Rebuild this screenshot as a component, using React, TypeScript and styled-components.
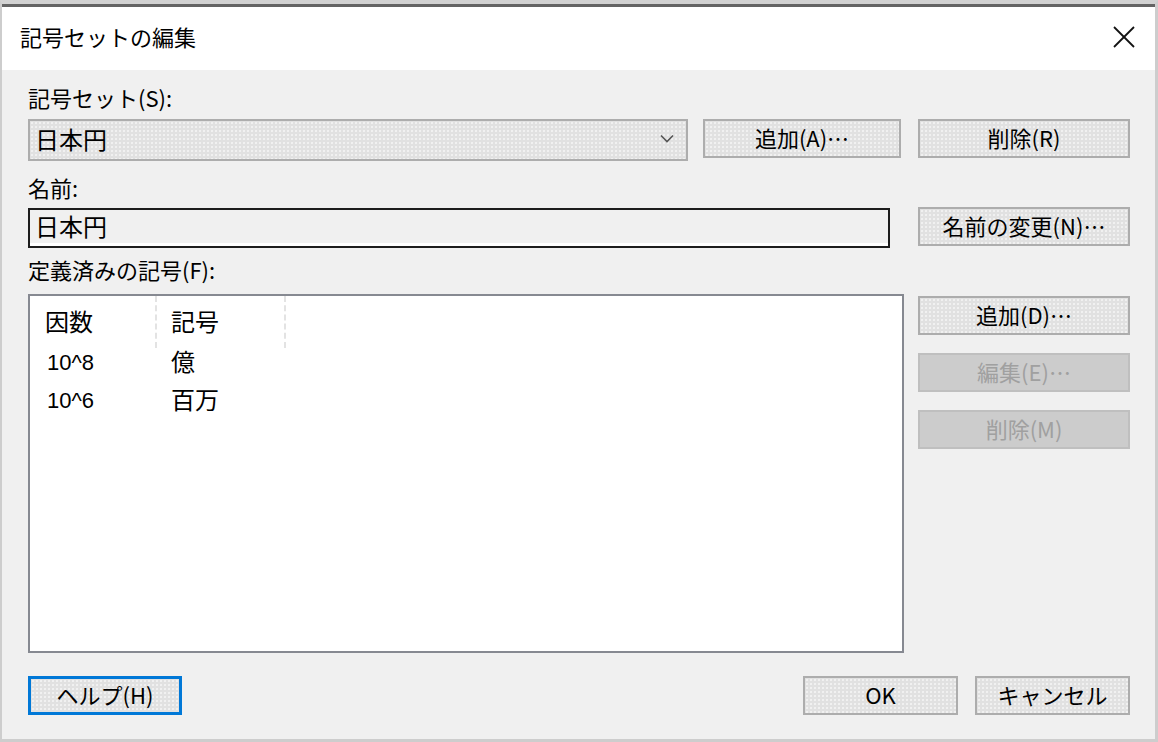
import React from "react";
import styled, { createGlobalStyle, css } from "styled-components";

const Global = createGlobalStyle`
  html, body { margin: 0; padding: 0; background: #f0f0f0; overflow: hidden; }
  body { font-family: "Noto Sans CJK JP", "Noto Sans", sans-serif; color: #000; }
  * { box-sizing: border-box; }
`;

const Frame = styled.div`
  width: 1158px;
  height: 742px;
  border: 2px solid #cdcdcd;
  border-top: 4px solid #d2d2d2;
  border-bottom-width: 3px;
  border-right-width: 3px;
  display: flex;
  flex-direction: column;
`;

const TitleBar = styled.div`
  height: 66px;
  background: #ffffff;
  border-top: 3px solid #646464;
  display: flex;
  align-items: center;
  justify-content: space-between;
  padding: 0 20px 0 18px;
`;

const Title = styled.div`
  font-size: 22px;
  line-height: 1;
  padding-bottom: 6px;
`;

const CloseWrap = styled.div`
  display: flex;
  padding-bottom: 4px;
`;

const Body = styled.div`
  flex: 1;
  background: #f0f0f0;
  padding: 16px 25px 0 26px;
  display: flex;
  flex-direction: column;
`;

const Label = styled.div<{ $mt?: number; $mb?: number }>`
  height: 26px;
  font-size: 22px;
  line-height: 22px;
  margin-top: ${(p) => p.$mt ?? 0}px;
  margin-bottom: ${(p) => p.$mb ?? 7}px;
`;

const Row = styled.div`
  display: flex;
  align-items: flex-start;
`;

const dither = css`
  background-color: #e1e1e1;
  background-image: radial-gradient(circle, rgba(255, 255, 255, 0.55) 0.7px, transparent 1px);
  background-size: 4px 4px;
`;

const Combo = styled.div`
  width: 660px;
  height: 42px;
  ${dither};
  border: 2px solid #adadad;
  display: flex;
  align-items: center;
  justify-content: space-between;
  padding: 0 12px 3px 5px;
  font-size: 24px;
`;

const Button = styled.div<{ $w: number; $disabled?: boolean; $focus?: boolean; $ml?: number; $mt?: number }>`
  width: ${(p) => p.$w}px;
  height: 39px;
  margin-left: ${(p) => p.$ml ?? 0}px;
  margin-top: ${(p) => p.$mt ?? 0}px;
  ${dither};
  border: 2px solid #adadad;
  display: flex;
  align-items: center;
  justify-content: center;
  padding-bottom: 4px;
  font-size: 22px;
  color: #000;
  white-space: nowrap;
  ${(p) =>
    p.$disabled &&
    css`
      background-color: #cccccc;
      background-image: none;
      border-color: #bfbfbf;
      color: #a0a0a0;
    `}
  ${(p) =>
    p.$focus &&
    css`
      border: 3px solid #0078d7;
    `}
`;

const NameInput = styled.div`
  width: 862px;
  height: 40px;
  background: #f0f0f0;
  border: 2px solid #1c1c1c;
  box-shadow: inset 0 -3px 0 #ffffff;
  display: flex;
  align-items: center;
  padding: 0 5px 5px;
  font-size: 24px;
`;

const ListBox = styled.div`
  width: 876px;
  height: 359px;
  background: #ffffff;
  border: 2px solid #868991;
`;

const Header = styled.div`
  display: flex;
  height: 52px;
  margin-bottom: -6px;
`;

const HeadCell = styled.div<{ $w: number; $pl?: number }>`
  width: ${(p) => p.$w}px;
  height: 52px;
  border-right: 2px dashed #e3e3e3;
  display: flex;
  align-items: center;
  padding-left: ${(p) => p.$pl ?? 15}px;
  padding-bottom: 4px;
  font-size: 24px;
`;

const ListRow = styled.div`
  display: flex;
  height: 38px;
  align-items: center;
`;

const Cell = styled.div<{ $w: number; $pl?: number }>`
  width: ${(p) => p.$w}px;
  padding-left: ${(p) => p.$pl ?? 15}px;
  font-size: 24px;
  line-height: 1;
`;

const NumCell = styled(Cell)`
  font-family: "Liberation Sans", sans-serif;
  font-size: 22px;
  padding-top: 3px;
  padding-left: 17px;
`;

const SideColumn = styled.div`
  margin-left: 14px;
  padding-top: 2px;
  display: flex;
  flex-direction: column;
  gap: 18px;
`;

const Footer = styled.div`
  margin-top: 23px;
  display: flex;
  align-items: center;
`;

const Spacer = styled.div`
  flex: 1;
`;

const Chevron = () => (
  <svg width="14" height="9" viewBox="0 0 14 9">
    <polyline points="1,1.5 7,7.5 13,1.5" fill="none" stroke="#555" strokeWidth="1.6" />
  </svg>
);

const CloseIcon = () => (
  <svg width="22" height="22" viewBox="0 0 22 22">
    <line x1="1" y1="1" x2="21" y2="21" stroke="#111" strokeWidth="1.8" />
    <line x1="21" y1="1" x2="1" y2="21" stroke="#111" strokeWidth="1.8" />
  </svg>
);

export default function App() {
  return (
    <>
      <Global />
      <Frame>
        <TitleBar>
          <Title>記号セットの編集</Title>
          <CloseWrap>
            <CloseIcon />
          </CloseWrap>
        </TitleBar>
        <Body>
          <Label>記号セット(S):</Label>
          <Row>
            <Combo>
              <span>日本円</span>
              <Chevron />
            </Combo>
            <Button $w={198} $ml={15}>追加(A)…</Button>
            <Button $w={212} $ml={17}>削除(R)</Button>
          </Row>
          <Label $mt={15} $mb={6}>名前:</Label>
          <Row>
            <NameInput>日本円</NameInput>
            <Button $w={212} $ml={28} $mt={-1}>名前の変更(N)…</Button>
          </Row>
          <Label $mt={10} $mb={10}>定義済みの記号(F):</Label>
          <Row>
            <ListBox>
              <Header>
                <HeadCell $w={127}>因数</HeadCell>
                <HeadCell $w={129} $pl={14}>記号</HeadCell>
              </Header>
              <ListRow>
                <NumCell $w={127}>10^8</NumCell>
                <Cell $w={129} $pl={14}>億</Cell>
              </ListRow>
              <ListRow>
                <NumCell $w={127}>10^6</NumCell>
                <Cell $w={129} $pl={14}>百万</Cell>
              </ListRow>
            </ListBox>
            <SideColumn>
              <Button $w={212}>追加(D)…</Button>
              <Button $w={212} $disabled>編集(E)…</Button>
              <Button $w={212} $disabled>削除(M)</Button>
            </SideColumn>
          </Row>
          <Footer>
            <Button $w={154} $focus>ヘルプ(H)</Button>
            <Spacer />
            <Button $w={155}>OK</Button>
            <Button $w={155} $ml={17}>キャンセル</Button>
          </Footer>
        </Body>
      </Frame>
    </>
  );
}
